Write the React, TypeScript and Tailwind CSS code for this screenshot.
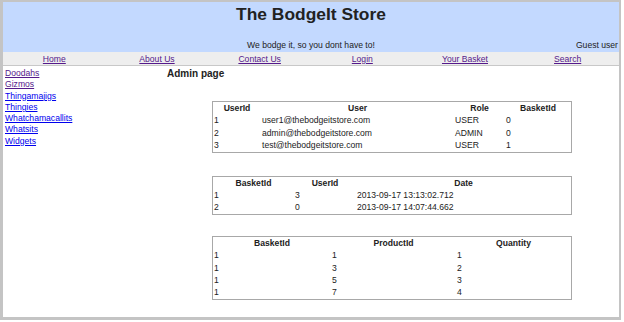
import React from "react";

const nav = ["Home", "About Us", "Contact Us", "Login", "Your Basket", "Search"];
const menu: [string, boolean][] = [
  ["Doodahs", true],
  ["Gizmos", true],
  ["Thingamajigs", false],
  ["Thingies", false],
  ["Whatchamacallits", false],
  ["Whatsits", false],
  ["Widgets", false],
];

function Table({
  cols,
  headers,
  rows,
}: {
  cols: string;
  headers: string[];
  rows: string[][];
}) {
  return (
    <div className="w-[360px] border border-[#a8a8a8]">
      <div className="grid" style={{ gridTemplateColumns: cols }}>
        {headers.map((h) => (
          <div key={h} className="h-[12.4px] leading-[12.4px] text-center font-bold">
            {h}
          </div>
        ))}
        {rows.map((r, i) =>
          r.map((c, j) => (
            <div key={i + "-" + j} className="h-[12.4px] leading-[12.4px] pl-[1px] whitespace-nowrap">
              {c}
            </div>
          ))
        )}
      </div>
    </div>
  );
}

export default function App() {
  return (
    <div className="w-[624px] h-[322px] bg-white overflow-hidden font-['Liberation_Sans',Arial,sans-serif] text-[8.6px] text-[#222]">
      <div className="w-[621px] h-[320px] border-l-[3px] border-t-2 border-r-2 border-b-[3px] border-[#c4c4c4] flex flex-col">
        <div className="bg-[#c3d9ff] h-[50px] flex flex-col">
          <h1 className="text-center font-bold text-[17.4px] leading-[17.4px] pt-[4px]">
            The BodgeIt Store
          </h1>
          <div className="grid grid-cols-[30%_40%_30%] mt-auto pb-[2px] leading-[10px]">
            <div>&nbsp;</div>
            <div className="text-center">We bodge it, so you dont have to!</div>
            <div className="text-right pr-[1px]">Guest user</div>
          </div>
        </div>
        <div className="bg-[#eeeeee] h-[13px] grid grid-cols-6 leading-[14px]">
          {nav.map((n) => (
            <div key={n} className="text-center">
              <a href="#" className="text-[#551a8b] underline">
                {n}
              </a>
            </div>
          ))}
        </div>
        <div className="flex-1 border-t border-[#c8c8c8] flex">
          <div className="w-[160px] shrink-0 pl-[2px] pt-[2px] flex flex-col leading-[11.3px]">
            {menu.map(([m, v]) => (
              <div key={m}>
                <a href="#" className={v ? "text-[#551a8b] underline" : "text-[#0000ee] underline"}>
                  {m}
                </a>
              </div>
            ))}
          </div>
          <div className="flex-1 flex flex-col">
            <h3 className="font-bold text-[10px] leading-[12px] pl-[4px] mt-[2px]">Admin page</h3>
            <div className="flex flex-col items-center pl-[2px] mt-[21px]">
              <Table
                cols="48px 193px 51px 66px"
                headers={["UserId", "User", "Role", "BasketId"]}
                rows={[
                  ["1", "user1@thebodgeitstore.com", "USER", "0"],
                  ["2", "admin@thebodgeitstore.com", "ADMIN", "0"],
                  ["3", "test@thebodgeitstore.com", "USER", "1"],
                ]}
              />
              <div className="mt-[23px]">
                <Table
                  cols="81px 62px 215px"
                  headers={["BasketId", "UserId", "Date"]}
                  rows={[
                    ["1", "3", "2013-09-17 13:13:02.712"],
                    ["2", "0", "2013-09-17 14:07:44.662"],
                  ]}
                />
              </div>
              <div className="mt-[21px]">
                <Table
                  cols="118px 125px 115px"
                  headers={["BasketId", "ProductId", "Quantity"]}
                  rows={[
                    ["1", "1", "1"],
                    ["1", "3", "2"],
                    ["1", "5", "3"],
                    ["1", "7", "4"],
                  ]}
                />
              </div>
            </div>
          </div>
        </div>
      </div>
    </div>
  );
}
